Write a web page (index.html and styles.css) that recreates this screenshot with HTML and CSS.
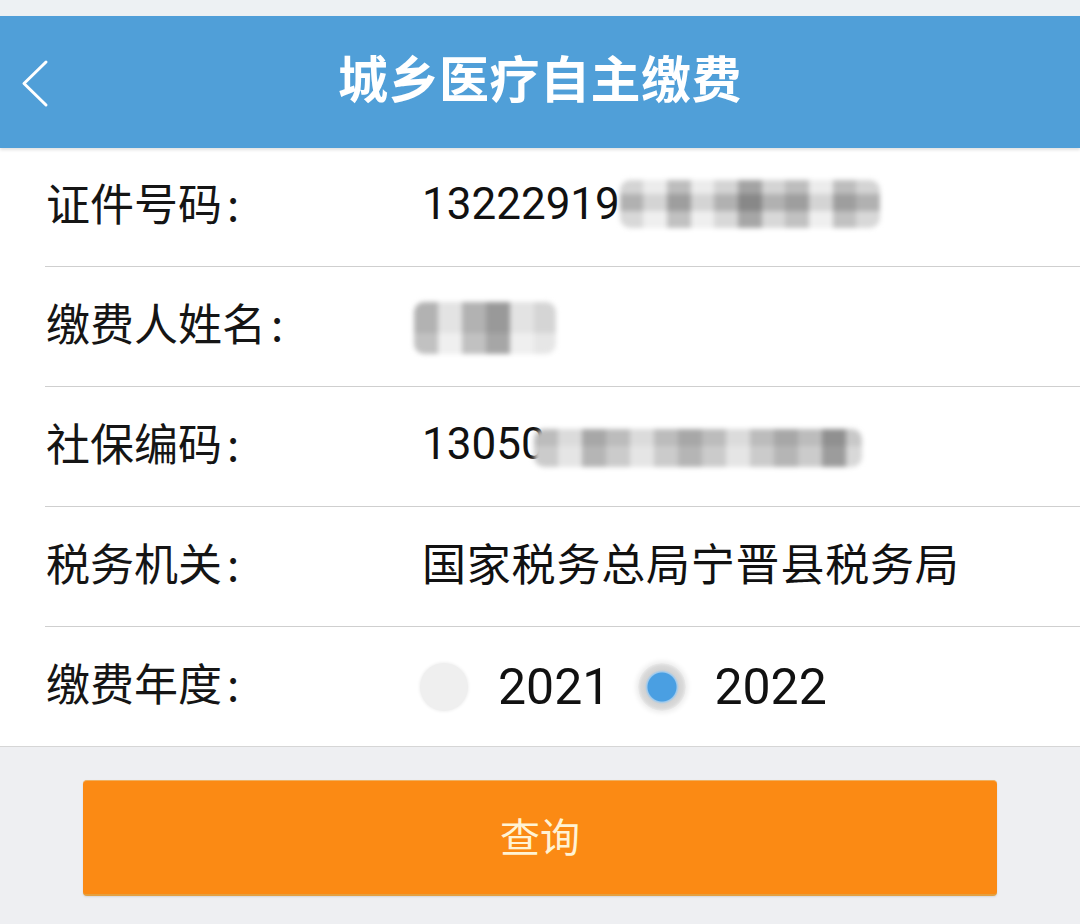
FILE: index.html
```html
<!DOCTYPE html>
<html lang="zh">
<head>
<meta charset="utf-8">
<title>城乡医疗自主缴费</title>
<link rel="stylesheet" href="styles.css">
</head>
<body>
<div class="topstrip"></div>
<header class="appbar">
  <svg class="back" width="34" height="50" viewBox="0 0 34 50"><path d="M29 3 L7 24.5 L29 46" fill="none" stroke="#ffffff" stroke-width="3" stroke-linecap="round" stroke-linejoin="round"/></svg>
  <h1 class="title">城乡医疗自主缴费</h1>
</header>
<main class="form">
  <div class="row first">
    <div class="label">证件号码<span class="colon">:</span></div>
    <div class="value">13222919<span class="mosaic m1"><i class="c2"></i><i class="c1"></i><i class="c3"></i><i class="c1"></i><i class="c2"></i><i class="c4"></i><i class="c2"></i><i class="c3"></i><i class="c1"></i><i class="c3"></i><i class="c2"></i></span></div>
  </div>
  <div class="row">
    <div class="label">缴费人姓名<span class="colon">:</span></div>
    <div class="value"><span class="mosaic m2"><i class="c3"></i><i class="c1"></i><i class="c3"></i><i class="c4"></i><i class="c1"></i></span></div>
  </div>
  <div class="row">
    <div class="label">社保编码<span class="colon">:</span></div>
    <div class="value"><span class="num">13050</span><span class="mosaic m3"><i class="c2"></i><i class="c1"></i><i class="c3"></i><i class="c2"></i><i class="c1"></i><i class="c2"></i><i class="c3"></i><i class="c2"></i><i class="c1"></i><i class="c2"></i><i class="c3"></i><i class="c2"></i><i class="c4"></i></span></div>
  </div>
  <div class="row">
    <div class="label">税务机关<span class="colon">:</span></div>
    <div class="value cjk">国家税务总局宁晋县税务局</div>
  </div>
  <div class="row">
    <div class="label">缴费年度<span class="colon">:</span></div>
    <div class="value radios">
      <span class="radio"></span><span class="year">2021</span>
      <span class="radio checked"></span><span class="year">2022</span>
    </div>
  </div>
</main>
<section class="actions">
  <button class="query">查询</button>
</section>
</body>
</html>
```
FILE: styles.css
```css
html, body {
  margin: 0;
  padding: 0;
}
body {
  width: 1080px;
  height: 924px;
  overflow: hidden;
  background: #eeeff2;
  font-family: Roboto, "Noto Sans CJK SC", sans-serif;
  color: #111;
}
.topstrip {
  height: 16px;
  background: #edf1f3;
}
.appbar {
  height: 132px;
  background: #509fd8;
  display: flex;
  align-items: center;
  justify-content: center;
  position: relative;
  box-shadow: 0 2px 3px rgba(0,0,0,0.12);
  z-index: 1;
}
.back {
  position: absolute;
  left: 17px;
  top: 43px;
}
.title {
  margin: 0;
  font-family: "Noto Sans CJK SC", sans-serif;
  font-weight: 700;
  font-size: 50px;
  color: #ffffff;
  letter-spacing: 0.5px;
  line-height: 1;
  margin-top: -12px;
}
.form {
  background: #ffffff;
  border-bottom: 1px solid #d6d6d6;
}
.row {
  margin-left: 45px;
  height: 119px;
  border-top: 1px solid #cfcfcf;
  display: flex;
  align-items: center;
  font-size: 44px;
}
.row.first {
  height: 118px;
  border-top: none;
}
.label {
  width: 377px;
  flex: none;
  font-family: "Noto Sans CJK SC", sans-serif;
  padding-left: 1px;
  box-sizing: border-box;
  margin-top: -10px;
  color: #151515;
}
.colon {
  margin-left: 5px;
}
.value {
  display: flex;
  align-items: center;
  font-family: Roboto, "Noto Sans CJK SC", sans-serif;
  font-size: 44px;
  margin-top: -6px;
  color: #111;
}
.value.cjk {
  font-family: "Noto Sans CJK SC", sans-serif;
  margin-top: -10px;
  letter-spacing: 0.8px;
}
.mosaic {
  display: inline-flex;
  filter: blur(2.5px);
  border-radius: 10px;
  overflow: hidden;
}
.mosaic i {
  display: block;
  width: 24px;
  height: 100%;
}
.m1 {
  height: 48px;
  width: 260px;
  background: linear-gradient(#e2e2e2 0 30%, #bdbdbd 30% 65%, #e6e6e6 65%);
}
.m2 {
  height: 52px;
  width: 142px;
  margin-left: -8px;
  margin-top: 8px;
  background: linear-gradient(#d5d5d5 0 60%, #e6e6e6 60%);
}
.m3 {
  height: 38px;
  width: 328px;
  margin-top: 8px;
  margin-left: -12px;
  background: linear-gradient(#c8c8c8 0 45%, #d8d8d8 45%);
}
.mosaic .c1 { background: rgba(255,255,255,0.35); }
.mosaic .c2 { background: rgba(0,0,0,0.06); }
.mosaic .c3 { background: rgba(0,0,0,0.16); }
.mosaic .c4 { background: rgba(0,0,0,0.28); }
.radios {
  margin-top: 0;
  font-size: 50px;
}
.radio {
  width: 48px;
  height: 48px;
  border-radius: 50%;
  background: #efefef;
  box-shadow: 0 0 3px 1px rgba(0,0,0,0.06);
  margin-left: -2px;
  margin-right: 30px;
  flex: none;
}
.radio.checked {
  background: radial-gradient(circle, #4a9fe2 0 14px, #9cc9ee 15px, #d2d2d2 17px, #dadada 21px, rgba(220,220,220,0.6) 24px);
  box-shadow: 0 0 5px 2px rgba(0,0,0,0.08);
  margin-left: 0;
  margin-right: 28px;
}
.year {
  margin-right: 28px;
}
.actions {
  padding: 33px 83px 0;
}
.query {
  display: block;
  width: 914px;
  height: 116px;
  border: none;
  border-top: 1px solid #efb060;
  border-bottom: 2px solid #e4a040;
  border-radius: 4px;
  background: #fb8a14;
  color: #fff3d4;
  font-family: "Noto Sans CJK SC", sans-serif;
  font-size: 40px;
  padding: 0 0 6px;
  box-shadow: 0 1px 2px rgba(0,0,0,0.1);
}
```
